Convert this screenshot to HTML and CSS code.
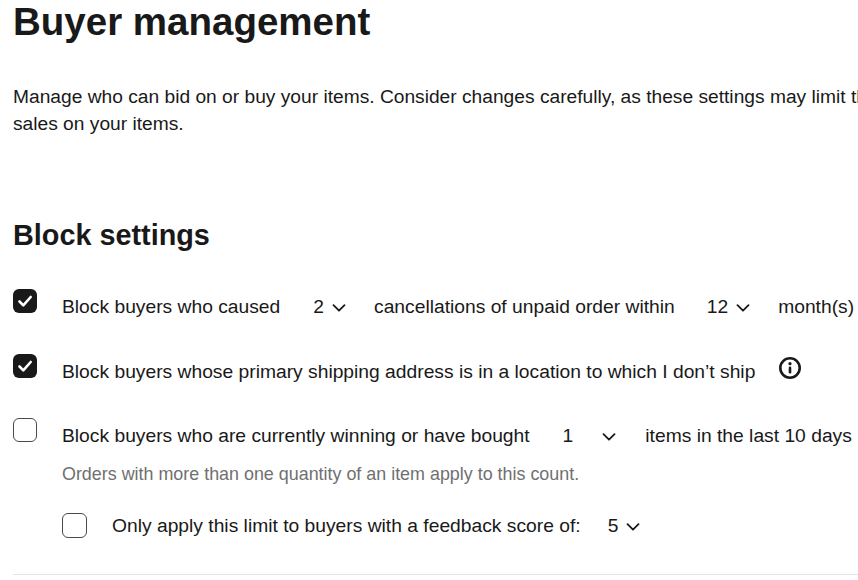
FILE: index.html
```html
<!DOCTYPE html>
<html lang="en">
<head>
<meta charset="utf-8">
<title>Buyer management</title>
<link rel="stylesheet" href="styles.css">
</head>
<body>
<main class="page">
  <h1 class="title">Buyer management</h1>
  <p class="intro">Manage who can bid on or buy your items. Consider changes carefully, as these settings may limit the number of bids and<br>sales on your items.</p>
  <h2 class="section-title">Block settings</h2>

  <div class="setting">
    <span class="check check-on"><svg viewBox="0 0 24 24" width="24" height="24"><path d="M6.5 12.5l3.8 3.8 7.4-8.3" fill="none" stroke="#fff" stroke-width="2.6" stroke-linecap="round" stroke-linejoin="round"/></svg></span>
    <div class="line">
      <span>Block buyers who caused</span>
      <span class="select select-a">2<svg class="chev" viewBox="0 0 14 8" width="14" height="8"><path d="M1.5 1.2L7 6.7l5.5-5.5" fill="none" stroke="#191919" stroke-width="1.8" stroke-linecap="round" stroke-linejoin="round"/></svg></span>
      <span>cancellations of unpaid order within</span>
      <span class="select select-b">12<svg class="chev" viewBox="0 0 14 8" width="14" height="8"><path d="M1.5 1.2L7 6.7l5.5-5.5" fill="none" stroke="#191919" stroke-width="1.8" stroke-linecap="round" stroke-linejoin="round"/></svg></span>
      <span>month(s)</span>
    </div>
  </div>

  <div class="setting">
    <span class="check check-on"><svg viewBox="0 0 24 24" width="24" height="24"><path d="M6.5 12.5l3.8 3.8 7.4-8.3" fill="none" stroke="#fff" stroke-width="2.6" stroke-linecap="round" stroke-linejoin="round"/></svg></span>
    <div class="line">
      <span>Block buyers whose primary shipping address is in a location to which I don’t ship</span>
      <svg class="info" viewBox="0 0 24 24" width="24" height="24"><circle cx="12" cy="12" r="9.7" fill="none" stroke="#191919" stroke-width="2.6"/><circle cx="12" cy="7.7" r="1.6" fill="#191919"/><rect x="10.7" y="10.6" width="2.6" height="7" rx="1.3" fill="#191919"/></svg>
    </div>
  </div>

  <div class="setting setting-last">
    <span class="check"></span>
    <div class="body">
      <div class="line">
        <span>Block buyers who are currently winning or have bought</span>
        <span class="select select-c">1<svg class="chev" viewBox="0 0 14 8" width="14" height="8"><path d="M1.5 1.2L7 6.7l5.5-5.5" fill="none" stroke="#191919" stroke-width="1.8" stroke-linecap="round" stroke-linejoin="round"/></svg></span>
        <span>items in the last 10 days</span>
      </div>
      <p class="hint">Orders with more than one quantity of an item apply to this count.</p>
      <div class="sub">
        <span class="check"></span>
        <span class="sub-label">Only apply this limit to buyers with a feedback score of:</span>
        <span class="select select-d">5<svg class="chev" viewBox="0 0 14 8" width="14" height="8"><path d="M1.5 1.2L7 6.7l5.5-5.5" fill="none" stroke="#191919" stroke-width="1.8" stroke-linecap="round" stroke-linejoin="round"/></svg></span>
      </div>
    </div>
  </div>
  <hr class="rule">
</main>
</body>
</html>
```
FILE: styles.css
```css
html, body {
  margin: 0;
  padding: 0;
  width: 858px;
  height: 580px;
  overflow: hidden;
  background: #fff;
}
.page {
  width: 1000px;
  padding: 0 0 0 13px;
  font-family: "Liberation Sans", Arial, sans-serif;
  font-size: 19.26px;
  line-height: 24px;
  color: #191919;
}
.title {
  margin: 0;
  padding-top: 2px;
  font-size: 38.5px;
  line-height: 40px;
  font-weight: 700;
}
.intro {
  margin: 0;
  padding-top: 41px;
  line-height: 27px;
  white-space: nowrap;
  font-size: 19.2px;
}
.section-title {
  margin: 0;
  padding-top: 82px;
  font-size: 28.8px;
  line-height: 32px;
  font-weight: 700;
}
.setting {
  display: flex;
  gap: 25px;
  margin-top: 38px;
}
.setting + .setting {
  margin-top: 35px;
}
.setting-last.setting {
  margin-top: 34px;
}
.check {
  flex: none;
  box-sizing: border-box;
  width: 24px;
  height: 24px;
  border: 1.5px solid #4a4a4a;
  border-radius: 6px;
  background: #fff;
}
.check-on {
  border: 0;
  background: #191919;
}
.check svg {
  display: block;
}
.line {
  display: flex;
  align-items: center;
  height: 24px;
  padding-top: 6px;
  white-space: nowrap;
}
.select {
  display: inline-flex;
  align-items: center;
  gap: 8px;
}
.chev {
  margin-top: 2px;
}
.select-a { margin: 0 28px 0 33px; }
.select-b { margin: 0 28px 0 32px; }
.select-c { margin: 0 29px 0 33px; gap: 29px; }
.select-d { margin-left: 27px; }
.info {
  margin: -9px 0 0 23px;
}
.hint {
  margin: 0;
  padding-top: 14px;
  font-size: 17.9px;
  line-height: 24px;
  color: #707070;
}
.sub {
  display: flex;
  align-items: center;
  margin-top: 27px;
  white-space: nowrap;
}
.sub .check {
  width: 25px;
  height: 25px;
  margin-right: 25px;
}
.rule {
  width: 985px;
  height: 1px;
  margin: 36px 0 0;
  border: 0;
  background: #e5e5e5;
}
```
